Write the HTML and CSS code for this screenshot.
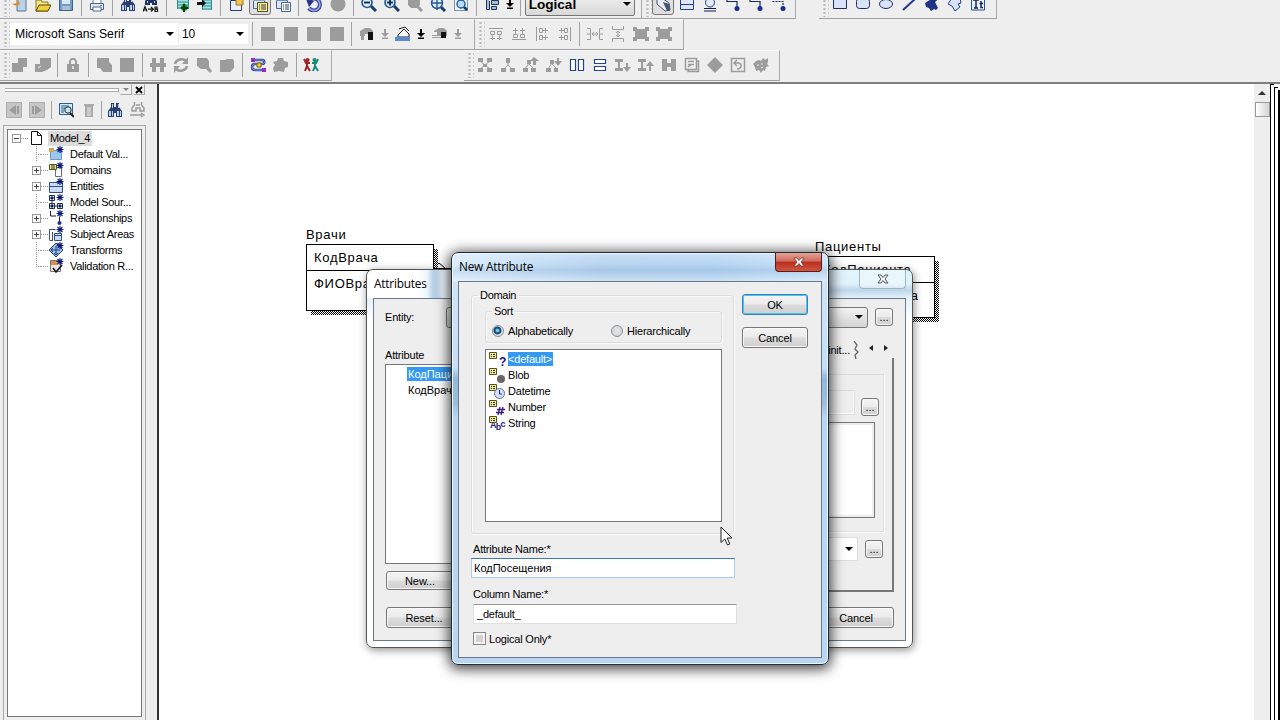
FILE: index.html
```html
<!DOCTYPE html>
<html lang="ru">
<head>
    <meta charset="UTF-8">
    <meta name="viewport" content="width=device-width, initial-scale=1.0">
    <title>Model_4</title>
    <link rel="stylesheet" href="styles.css">
</head>
<body>
    <!-- Icon set -->
    <svg class="sprite">
        <symbol id="new" viewBox="0 0 16 16"><path d="M5 3h9v12H5z" fill="#b9d2ea" stroke="#5a7894"/><path d="M0 8l5-1 1-4 2 5-3 2-3-1z" fill="#d98a32"/></symbol>
        <symbol id="open" viewBox="0 0 16 16"><path d="M1 4h5l1 2h6v9H1z" fill="#f5e58a" stroke="#8a7420"/><path d="M4 9h12l-3 6H1z" fill="#efd040" stroke="#574800"/></symbol>
        <symbol id="save" viewBox="0 0 16 16"><path d="M1.500 1.500h13v13h-13z" fill="#6f9cc9" stroke="#3f5f85"/><path d="M4 2h8v6H4z" fill="#d8e8f8"/><path d="M4 10h8v4H4z" fill="#a9bfd2"/></symbol>
        <symbol id="print" viewBox="0 0 16 16"><path d="M4 2h8v6H4z" fill="#fff" stroke="#6a7fa0"/><path d="M1.500 7.500h13v6h-13z" fill="#dfe6f2" stroke="#51658c"/><path d="M4 11h8v4H4z" fill="#fff" stroke="#51658c"/><path d="M11 9h2v1h-2z" fill="#39a05a"/></symbol>
        <symbol id="find" viewBox="0 0 16 16"><path d="M4 1h3v4h2V1h3v4l3 4v6H9v-4H7v4H1V9l3-4z" fill="#27406f"/><path d="M5 2h1v4H5zM11 2h1v4h-1zM2 9h2v5H2zM5 9h1v5H5zM10 9h2v5h-2zM13 9h1v5h-1z" fill="#bcd3ef"/></symbol>
        <symbol id="replace" viewBox="0 0 16 16"><path d="M4 0h3v3h2V0h3v3l2 2v4H9V7H7v2H2V5l2-2z" fill="#1c3560"/><path d="M4 5h1v2H4zM11 5h1v2h-1z" fill="#bcd3ef"/><path d="M0 15.500l2-5 2 5M.7 14h2.600M12 11v4.500h2.500v-2.300H12h2V11zM5 13.200h5M8 11l2.300 2.200L8 15.500" fill="none" stroke="#111" stroke-width="1.200"/></symbol>
        <symbol id="tabin" viewBox="0 0 16 16"><path d="M3 0h12v13H3z" fill="#a7e0e0"/><path d="M3 3h12M3 6h12M3 9h12M3 12h12M3.500 0v13M14.500 0v13" stroke="#2b8d93"/><path d="M10 7l5 5-5 4-4-4z" fill="#118a2c"/><path d="M9 8h2v8H9zM7 11h7v2H7z" fill="#043c10"/></symbol>
        <symbol id="tabout" viewBox="0 0 16 16"><path d="M5 1h10v13H5z" fill="#a7e0e0"/><path d="M5 4h10M5 7h10M5 10h10M5 13h10M5.500 1v13M14.500 1v13" stroke="#2b8d93"/><path d="M0 6h5V3l4 4-4 4V9H0z" fill="#0e1414"/></symbol>
        <symbol id="box" viewBox="0 0 16 16"><path d="M2.500 4.500h11v10h-11z" fill="#eaf0fb" stroke="#2c3a78"/><path d="M8 1h7v8H8z" fill="#f3c653" stroke="#a07318"/></symbol>
        <symbol id="sheets" viewBox="0 0 16 16"><path d="M1.500 2.500h11v10h-11z" fill="#dbe6f7" stroke="#52658f"/><path d="M1 2h12v3H1z" fill="#8aa4cc"/><path d="M5.500 6.500h10v9h-10z" fill="#fdf29d" stroke="#55531a"/><path d="M7 9h1m1 0h5M7 11h1m1 0h5M7 13h1m1 0h5" stroke="#333"/></symbol>
        <symbol id="sheetsb" viewBox="0 0 16 16"><path d="M1.500 2.500h11v10h-11z" fill="#dbe6f7" stroke="#52658f"/><path d="M1 2h12v3H1z" fill="#6f8fc6"/><path d="M6.500 6.500h9v9h-9z" fill="#fff" stroke="#45669d"/><path d="M8 9h1m1 0h4M8 11h1m1 0h4M8 13h1m1 0h4" stroke="#345"/></symbol>
        <symbol id="undo" viewBox="0 0 16 16"><path d="M4 4a6 6 0 1 1-1 8" fill="none" stroke="#3a459b" stroke-width="4"/><path d="M4 4a6 6 0 1 1-1 8" fill="none" stroke="#9aa6ea" stroke-width="1.500"/><path d="M0 3l8 2-5 6z" fill="#26358f"/></symbol>
        <symbol id="dot" viewBox="0 0 16 16"><circle cx="8" cy="8" r="7.500" fill="#9c9c9c"/></symbol>
        <symbol id="lens" viewBox="0 0 16 16"><path d="M10 10l5 5" stroke="#173d6d" stroke-width="3"/><circle cx="6" cy="6.500" r="5" fill="#d9efff" stroke="#2a5791" stroke-width="1.600"/><path d="M3 6.500h6" stroke="#16325e" stroke-width="2"/></symbol>
        <symbol id="lensplus" viewBox="0 0 16 16"><use href="#lens"/><path d="M6 3.500v6" stroke="#16325e" stroke-width="2"/></symbol>
        <symbol id="lensoff" viewBox="0 0 16 16"><path d="M10 10l5 5" stroke="#9c9c9c" stroke-width="3"/><path d="M1 0h12v9l-3 3H4l-3-3z" fill="#9c9c9c"/></symbol>
        <symbol id="lensfit" viewBox="0 0 16 16"><path d="M10 10l5 5" stroke="#173d6d" stroke-width="3"/><circle cx="7" cy="7" r="5.500" fill="#d9efff" stroke="#2a5791" stroke-width="1.500"/><path d="M1 7h12M7 1v13" stroke="#2a5791" stroke-width="1.400"/></symbol>
        <symbol id="lenssel" viewBox="0 0 16 16"><path d="M1.500 1.500h13v13h-13z" fill="#e7f2fc" stroke="#1c3560" stroke-dasharray="1 1"/><path d="M10 10l4 4" stroke="#173d6d" stroke-width="2.500"/><circle cx="8" cy="8" r="4" fill="#b6dcff" stroke="#2a5791" stroke-width="1.400"/></symbol>
        <symbol id="layout" viewBox="0 0 16 16"><path d="M2.500 0v13.500h3V5M7.500 4.500h7v4h-7zM7.500 10.500h5v3h-5z" fill="#a9bedc" stroke="#1c3560"/></symbol>
        <symbol id="down" viewBox="0 0 8 16"><path d="M3 3h2v4h3l-4 4-4-4h3zM1 11.500h6v1.500H1z"/></symbol>
        <symbol id="arrow" viewBox="0 0 16 16"><path d="M2 2l5 0 7 5 1 7-5 1-8-7z" fill="#e9edf5" stroke="#46546e"/><path d="M8 6l6 2 1 7h-3z" fill="#46546e"/></symbol>
        <symbol id="rowbox" viewBox="0 0 16 16"><path d="M1.500 1.500h13v12h-13zM1 8.500h14" fill="#dde5f7" stroke="#27408b"/></symbol>
        <symbol id="under" viewBox="0 0 16 16"><circle cx="8" cy="6.500" r="4.500" fill="#e1e9fa" stroke="#27408b"/><path d="M2 12.500h12M2 15h12" stroke="#111c48"/></symbol>
        <symbol id="link" viewBox="0 0 16 16"><path d="M2 2v3.500h10V12" fill="none" stroke="#1a2a60" stroke-width="1.200"/><circle cx="12" cy="12.500" r="2.500" fill="#1b2c8e"/></symbol>
        <symbol id="linkdash" viewBox="0 0 16 16"><path d="M2 2v3.500h10V12" fill="none" stroke="#1a2a60" stroke-width="1.200" stroke-dasharray="2 1"/><circle cx="12" cy="12.500" r="2.500" fill="#1b2c8e"/></symbol>
        <symbol id="rect" viewBox="0 0 16 16"><path d="M1.500 2.500h13v10h-13z" fill="#d8e2f8" stroke="#1d2d62"/></symbol>
        <symbol id="round" viewBox="0 0 16 16"><rect x="1.500" y="2.500" width="13" height="10" rx="3" fill="#d8e2f8" stroke="#1d2d62"/></symbol>
        <symbol id="oval" viewBox="0 0 16 16"><ellipse cx="8" cy="8" rx="6.500" ry="4.500" fill="#d8e2f8" stroke="#1d2d62"/></symbol>
        <symbol id="line" viewBox="0 0 16 16"><path d="M2 14L14 3" stroke="#24398a" stroke-width="2"/></symbol>
        <symbol id="pin" viewBox="0 0 16 16"><path d="M14 1L4 11" stroke="#1e3384" stroke-width="3"/><path d="M1 7l8-5 5 10-2 2-2-1-3 2-2-3-3-1z" fill="#1e3384"/></symbol>
        <symbol id="poly" viewBox="0 0 16 16"><path d="M1 8l4-6h8l1 5-3 1 2 3-5 4-3-5z" fill="#d8e2f8" stroke="#27408b"/></symbol>
        <symbol id="text" viewBox="0 0 16 16"><path d="M1.500 1.500h13v12.500h-13z" fill="#eaf2fb" stroke="#27518b"/><path d="M3 4h6M6 4v8M4 12h4M11 5v6.500h2M9.500 7.500H13" stroke="#162757" stroke-width="1.500" fill="none"/></symbol>

        <symbol id="sq" viewBox="0 0 16 16"><path d="M1 1h14v14H1z"/></symbol>
        <symbol id="steps" viewBox="0 0 16 16"><path d="M6 1h9v9h-4v5H0V6h6z"/></symbol>
        <symbol id="stepsr" viewBox="0 0 16 16"><path d="M5 1h11v9l-4 3-5 2H0V7h5z"/><path d="M3 11l3-2" stroke="#eee"/></symbol>
        <symbol id="lock" viewBox="0 0 16 16"><path d="M2 7h2V4l2-3h4l2 3v3h2v8H2zM6 7h4V4L9 3H7L6 4z" fill-rule="evenodd"/><path d="M8 9v3" stroke="#eee" stroke-width="1.500"/></symbol>
        <symbol id="bag" viewBox="0 0 16 16"><path d="M1 1h12v4l3 3v7H7l-3-4H1z"/></symbol>
        <symbol id="join" viewBox="0 0 16 16"><path d="M2 1h4v5h4V1h4v5h2v4h-2v5h-4v-5H6v5H2v-5H0V6h2z"/></symbol>
        <symbol id="sync" viewBox="0 0 16 16"><path d="M2 7c1-5 8-6 11-3M14 9c-1 5-8 6-11 3" fill="none" stroke="#9c9c9c" stroke-width="2.500"/><path d="M15 0v7H9zM1 16V9h6z"/></symbol>
        <symbol id="lenssq" viewBox="0 0 16 16"><path d="M1 1h10l2 3v6l3 4-2 2-4-4H5l-4-3z"/></symbol>
        <symbol id="tag" viewBox="0 0 16 16"><path d="M1 3h5l2-1h6l1 2v7l-4 4H1z"/></symbol>
        <symbol id="flow" viewBox="0 0 16 16"><path d="M3 3h9c3 0 3 4 0 4H5c-4 0-4 6 0 6h8" fill="none" stroke="#2c3e9e" stroke-width="2.500"/><path d="M3 3h9c3 0 3 4 0 4H5c-4 0-4 6 0 6h8" fill="none" stroke="#8fb4ea" stroke-width=".8"/><path d="M1 1h4v4H1zM12 11h4v4h-4z" fill="#8f2bc7"/><path d="M7 6h4v4H7z" fill="#f1d832" stroke="#776500"/></symbol>
        <symbol id="puzzle" viewBox="0 0 16 16"><path d="M5 1h5l1 3 4 1v5l-3 1-1 4-5-1-5 1-1-4 2-3-2-3 4-1z"/></symbol>
        <symbol id="people" viewBox="0 0 16 16"><path d="M1 2l2 4h4M4 2v7M4 9l-2 5M4 9l3 5" stroke="#a31f25" stroke-width="2" fill="none"/><circle cx="4.500" cy="3" r="2" fill="#a31f25"/><path d="M15 2l-2 4H9M12 2v7M12 9l-2 5M12 9l3 5" stroke="#148c78" stroke-width="2" fill="none"/><circle cx="11.500" cy="3" r="2" fill="#148c78"/></symbol>

        <symbol id="fill" viewBox="0 0 16 16"><path d="M1 5l5-3h5l3 3v3H6v2H1zM2 10h3v4H2z"/><path d="M9 6h5v8H9z" fill="#111"/></symbol>
        <symbol id="bucket" viewBox="0 0 16 16"><path d="M3 9l6-6 5 5v3H3z" fill="#f6f6f6" stroke="#222"/><path d="M4 3l6-2 4 4" stroke="#222" fill="none"/><path d="M0 11h15v4H0z" fill="#5c8bd0"/></symbol>
        <symbol id="pen" viewBox="0 0 16 16"><path d="M2 5l5-3h5l3 3v5H0V9h5V6H2zM0 11h13v1H0z"/><path d="M9 6h5v6H9z" fill="#111"/></symbol>
        <symbol id="altop" viewBox="0 0 16 16"><path d="M1 2.500h14M2.500 5.500h4v3h-4zM9.500 5.500h4v3h-4zM4.500 8v6M11.500 8v6M2 12.500h5M9 12.500h5" class="ln"/></symbol>
        <symbol id="albot" viewBox="0 0 16 16"><path d="M1 13.500h14M2.500 8.500h4v3h-4zM9.500 8.500h4v3h-4zM4.500 2v6M11.500 2v6M2 4.500h5M9 4.500h5" class="ln"/></symbol>
        <symbol id="alleft" viewBox="0 0 16 16"><path d="M2.500 1v14M5.500 2.500h3v4h-3zM5.500 9.500h3v4h-3zM9 4.500h5M9 11.500h5M11.500 2v5M11.500 9v5" class="ln"/></symbol>
        <symbol id="alright" viewBox="0 0 16 16"><path d="M13.500 1v14M7.500 2.500h3v4h-3zM7.500 9.500h3v4h-3zM2 4.500h5M2 11.500h5M4.500 2v5M4.500 9v5" class="ln"/></symbol>
        <symbol id="sph" viewBox="0 0 16 16"><path d="M0 2.500h3.500v11H0M0 8h3M16 2.500h-3.500v11H16M13 8h3M5 8h6M7 6L5 8l2 2M9 6l2 2-2 2" class="ln"/></symbol>
        <symbol id="spv" viewBox="0 0 16 16"><path d="M2.500 0v3.500h11V0M2.500 16v-3.500h11V16M8 5v6M6 7l2-2 2 2M6 9l2 2 2-2" class="ln"/></symbol>
        <symbol id="group" viewBox="0 0 16 16"><path d="M0 1h4v2h8V1h4v4h-2v6h2v4h-4v-2H4v2H0v-4h2V5H0z"/></symbol>
        <symbol id="tree4" viewBox="0 0 16 16"><path d="M1 1h5v4H1zM10 1h5v4h-5zM1 11h5v4H1zM10 11h5v4h-5zM6 7h4v3H6z"/><path d="M3 4l10 8M13 4L3 12" class="ln"/></symbol>
        <symbol id="tree3" viewBox="0 0 16 16"><path d="M6 1h4v5H6zM1 11h5v4H1zM10 11h5v4h-5z"/><path d="M8 5v3L4 12M8 8l4 4" class="ln"/></symbol>
        <symbol id="treeup" viewBox="0 0 16 16"><path d="M4 3h4v4H4zM0 11h5v4H0zM8 11h5v4H8zM11 0l5 4h-3v4h-3V4H7z"/><path d="M6 6l-4 6M6 7l5 5" class="ln"/></symbol>
        <symbol id="treedn" viewBox="0 0 16 16"><path d="M4 3h4v4H4zM0 11h5v4H0zM8 11h4v4H8zM11 1h2v3h3l-4 5-4-5h3z"/><path d="M6 6l-4 6M6 7l5 5" class="ln"/></symbol>
        <symbol id="cols" viewBox="0 0 16 16"><path d="M1.500 2.500h5v11h-5zM9.500 2.500h5v11h-5z" fill="#fff" stroke="#214488" stroke-width="1.200"/></symbol>
        <symbol id="rows" viewBox="0 0 16 16"><path d="M2.500 2.500h11v4h-11zM2.500 9.500h11v4h-11z" fill="#fff" stroke="#214488" stroke-width="1.200"/></symbol>
        <symbol id="idn" viewBox="0 0 16 16"><path d="M0 2h8v3H5v6h3v3H0v-3h3V5H0zM11 6h2v4h3l-4 5-4-5h3z"/></symbol>
        <symbol id="iup" viewBox="0 0 16 16"><path d="M0 2h8v3H5v6h3v3H0v-3h3V5H0zM12 4l4 5h-3v5h-2V9H8z"/></symbol>
        <symbol id="aitch" viewBox="0 0 16 16"><path d="M1 2h5v4h4V2h5v12h-5v-4H6v4H1z"/></symbol>
        <symbol id="notes" viewBox="0 0 16 16"><path d="M1.500 1.500h11v11h-11zM12 4h2.500v10.500H4V12M4 4.500h6M4 7.500h6M4 10l4-3" class="ln" stroke-width="1.500"/></symbol>
        <symbol id="diamond" viewBox="0 0 16 16"><path d="M8 0l8 8-8 8-8-8z"/></symbol>
        <symbol id="back" viewBox="0 0 16 16"><path d="M1.500 1.500h13v13h-13zM5 6h4c3 1 3 6-2 6M7 3L4 6l3 3" class="ln" stroke-width="1.500"/></symbol>
        <symbol id="splat" viewBox="0 0 16 16"><path d="M0 7l3-3 3-1 2 1 2-3 2 2 3-2v4l-1 2 2 2-3 1-1 4-2-1-2 3-2-3-3 1-1-4z"/><path d="M5 7v2M9 6v2M8 11l2-1" stroke="#eee"/></symbol>

        <symbol id="page" viewBox="0 0 16 16"><path d="M3.500 1.500h6l4 4v9h-10z" fill="#fff" stroke="#111"/><path d="M9.500 1.500v4h4" fill="none" stroke="#111"/></symbol>
        <symbol id="star" viewBox="0 0 16 16"><path d="M12 0v7M8.500 3.500h7M9.500 1l5 5M14.500 1l-5 5" stroke="#0d1a7c" stroke-width="1.100"/></symbol>
        <symbol id="tdefault" viewBox="0 0 16 16"><path d="M2.500 4.500h11v9h-11z" fill="#9fc6ee" stroke="#6d97c2"/><path d="M1 2h5v4H1z" fill="#d2a855"/><use href="#star"/></symbol>
        <symbol id="tdomain" viewBox="0 0 16 16"><path d="M7.500 5.500h6v9h-6z" fill="#fff" stroke="#5c7192"/><path d="M1.500 2.500h7v5h-7z" fill="#eee98b" stroke="#55531a"/><path d="M3 4h4M3 6h4" stroke="#333"/><use href="#star"/></symbol>
        <symbol id="tentity" viewBox="0 0 16 16"><path d="M1.500 4.500h13v10h-13z" fill="#c9dbf5" stroke="#344f87"/><path d="M2 8.500h12" stroke="#344f87"/><use href="#star"/></symbol>
        <symbol id="tsource" viewBox="0 0 16 16"><path d="M1.500 1.500h5v5h-5zM1.500 9.500h5v5h-5zM9.500 9.500h5v5h-5z" fill="#dbe6fb" stroke="#1c2b50"/><path d="M3 3h2v2H3zM3 11h2v2H3zM11 11h2v2h-2zM4 7v2M7 12h2" stroke="#1c2b50"/><use href="#star"/></symbol>
        <symbol id="trel" viewBox="0 0 16 16"><path d="M2.500 1v5H8M11.500 7v5" stroke="#111c48" fill="none"/><circle cx="11.500" cy="13" r="2" fill="#1b2c8e"/><use href="#star"/></symbol>
        <symbol id="tsubj" viewBox="0 0 16 16"><path d="M1.500 14V3.500h6M5 14.500H1.500M4.500 14V6" stroke="#344f87" fill="none"/><path d="M6.500 7.500h7v7h-7z" fill="#c9dbf5" stroke="#344f87"/><path d="M7 9.500h7" stroke="#344f87"/><use href="#star"/></symbol>
        <symbol id="ttrans" viewBox="0 0 16 16"><path d="M8 1l7 7-7 7-7-7z" fill="#9fc0e8" stroke="#1d3d75"/><path d="M3 8h9M8 4v9M5 6L3 8l2 2M6 11l2 2 2-2" fill="none" stroke="#1d3d75"/><use href="#star"/></symbol>
        <symbol id="tvalid" viewBox="0 0 16 16"><path d="M2.500 2.500h10v11h-10z" fill="#e8e8e8" stroke="#777"/><path d="M3 3h7v4H3z" fill="#d8934a"/><path d="M5 10l3 4 6-7" fill="none" stroke="#111" stroke-width="1.600"/><use href="#star"/></symbol>

        <symbol id="card" viewBox="0 0 16 16"><path d="M.5 1.500h7v6h-7z" fill="#eeea9d" stroke="#55531a"/><path d="M2 3.500h1m1 0h2M2 5.500h1m1 0h2" stroke="#333"/></symbol>
        <symbol id="navl" viewBox="0 0 16 16"><path d="M.5.5h15v15H.5z" fill="#c6c6c6" stroke="#adadad"/><path d="M10 3v10L3 8zM11 4h2v8h-2z"/></symbol>
        <symbol id="navr" viewBox="0 0 16 16"><path d="M.5.5h15v15H.5z" fill="#c6c6c6" stroke="#adadad"/><path d="M6 3v10l7-5zM3 4h2v8H3z"/></symbol>
        <symbol id="look" viewBox="0 0 16 16"><path d="M1.500 1.500h13v11h-13z" fill="#d6e9f8" stroke="#27618b"/><path d="M3 4h8M3 6h4M3 8h3M3 10h3" stroke="#27618b"/><circle cx="10" cy="8" r="3.200" fill="#c8eaf7" stroke="#222"/><path d="M12 11l4 4" stroke="#222" stroke-width="2"/></symbol>
        <symbol id="trash" viewBox="0 0 16 16"><path d="M3 2h10v2H3zM4 4h8v11H4z" fill="#aaa"/><path d="M6 5h4v9H6z" fill="#ccc"/></symbol>
        <symbol id="findoff" viewBox="0 0 16 16"><path d="M4.500 0v3L2 6v3h4V6h4v3h4V6l-2.500-3V0M6 3h4M0 13h12M11 11l3 2-3 2" class="ln" stroke-width="1.500"/></symbol>
    </svg>

    <div class="app">
        <!-- Toolbars -->
        <div class="bars">
            <div class="bar-row">
                <div class="bar main-bar">
                    <i class="grip"></i>
                    <svg class="ico"><use href="#new"/></svg><svg class="ico"><use href="#open"/></svg><svg class="ico"><use href="#save"/></svg>
                    <i class="sep"></i>
                    <svg class="ico"><use href="#print"/></svg>
                    <i class="sep"></i>
                    <svg class="ico"><use href="#find"/></svg><svg class="ico"><use href="#replace"/></svg>
                    <i class="sep"></i>
                    <svg class="ico"><use href="#tabin"/></svg><svg class="ico"><use href="#tabout"/></svg>
                    <i class="sep"></i>
                    <svg class="ico"><use href="#box"/></svg><svg class="ico pressed"><use href="#sheets"/></svg><svg class="ico"><use href="#sheetsb"/></svg>
                    <i class="sep"></i>
                    <svg class="ico"><use href="#undo"/></svg><svg class="ico"><use href="#dot"/></svg>
                    <i class="sep"></i>
                    <svg class="ico"><use href="#lens"/></svg><svg class="ico"><use href="#lensplus"/></svg><svg class="ico"><use href="#lensoff"/></svg><svg class="ico"><use href="#lensfit"/></svg><svg class="ico"><use href="#lenssel"/></svg>
                    <i class="sep"></i>
                    <svg class="ico"><use href="#layout"/></svg><svg class="ico drop black"><use href="#down"/></svg>
                    <i class="sep"></i>
                    <div class="combo view-combo">Logical<i class="tri"></i></div>
                </div>
                <div class="bar tool-bar">
                    <i class="grip"></i>
                    <svg class="ico pressed"><use href="#arrow"/></svg><svg class="ico"><use href="#rowbox"/></svg><svg class="ico"><use href="#under"/></svg><svg class="ico"><use href="#link"/></svg><svg class="ico"><use href="#link"/></svg><svg class="ico"><use href="#linkdash"/></svg>
                </div>
                <div class="bar draw-bar">
                    <i class="grip"></i>
                    <svg class="ico"><use href="#rect"/></svg><svg class="ico"><use href="#round"/></svg><svg class="ico"><use href="#oval"/></svg><svg class="ico"><use href="#line"/></svg><svg class="ico"><use href="#pin"/></svg><svg class="ico"><use href="#poly"/></svg><svg class="ico"><use href="#text"/></svg>
                </div>
            </div>
            <div class="bar-row">
                <div class="bar font-bar">
                    <i class="grip"></i>
                    <div class="combo font-combo">Microsoft Sans Serif<i class="tri"></i></div>
                    <div class="combo size-combo">10<i class="tri"></i></div>
                    <i class="sep"></i>
                    <svg class="ico"><use href="#sq"/></svg><svg class="ico"><use href="#sq"/></svg><svg class="ico"><use href="#sq"/></svg><svg class="ico"><use href="#sq"/></svg>
                    <i class="sep"></i>
                    <svg class="ico"><use href="#fill"/></svg><svg class="ico drop"><use href="#down"/></svg><svg class="ico"><use href="#bucket"/></svg><svg class="ico drop black"><use href="#down"/></svg><svg class="ico"><use href="#pen"/></svg><svg class="ico drop"><use href="#down"/></svg>
                </div>
                <div class="bar align-bar">
                    <i class="grip"></i>
                    <svg class="ico"><use href="#altop"/></svg><svg class="ico"><use href="#albot"/></svg><svg class="ico"><use href="#alleft"/></svg><svg class="ico"><use href="#alright"/></svg>
                    <i class="sep"></i>
                    <svg class="ico"><use href="#sph"/></svg><svg class="ico"><use href="#spv"/></svg><svg class="ico"><use href="#group"/></svg><svg class="ico"><use href="#group"/></svg>
                </div>
            </div>
            <div class="bar-row">
                <div class="bar model-bar">
                    <i class="grip"></i>
                    <svg class="ico"><use href="#steps"/></svg><svg class="ico"><use href="#stepsr"/></svg>
                    <i class="sep"></i>
                    <svg class="ico"><use href="#lock"/></svg>
                    <i class="sep"></i>
                    <svg class="ico"><use href="#bag"/></svg><svg class="ico"><use href="#sq"/></svg>
                    <i class="sep"></i>
                    <svg class="ico"><use href="#join"/></svg><svg class="ico"><use href="#sync"/></svg><svg class="ico"><use href="#lenssq"/></svg><svg class="ico"><use href="#tag"/></svg>
                    <i class="sep"></i>
                    <svg class="ico"><use href="#flow"/></svg><svg class="ico"><use href="#puzzle"/></svg>
                    <i class="sep"></i>
                    <svg class="ico"><use href="#people"/></svg>
                </div>
                <div class="bar trans-bar">
                    <i class="grip"></i>
                    <svg class="ico"><use href="#tree4"/></svg><svg class="ico"><use href="#tree3"/></svg><svg class="ico"><use href="#treeup"/></svg><svg class="ico"><use href="#treedn"/></svg><svg class="ico"><use href="#cols"/></svg><svg class="ico"><use href="#rows"/></svg><svg class="ico"><use href="#idn"/></svg><svg class="ico"><use href="#iup"/></svg><svg class="ico"><use href="#aitch"/></svg><svg class="ico"><use href="#notes"/></svg><svg class="ico"><use href="#diamond"/></svg><svg class="ico"><use href="#back"/></svg><svg class="ico"><use href="#splat"/></svg>
                </div>
            </div>
        </div>

        <div class="work">
            <!-- Model explorer -->
            <div class="side">
                <div class="side-head">
                    <i class="rails"></i>
                    <span class="mini"><i class="tri grey"></i></span>
                    <span class="mini"><svg viewBox="0 0 8 8"><path d="M1 1l6 6M7 1L1 7" stroke="#000" stroke-width="1.800"/></svg></span>
                </div>
                <div class="side-tools">
                    <svg class="ico"><use href="#navl"/></svg><svg class="ico"><use href="#navr"/></svg>
                    <i class="sep"></i>
                    <svg class="ico"><use href="#look"/></svg><svg class="ico"><use href="#trash"/></svg>
                    <i class="sep"></i>
                    <svg class="ico"><use href="#find"/></svg><svg class="ico"><use href="#findoff"/></svg>
                </div>
                <div class="tree-frame">
                    <ul class="tree">
                        <li class="root"><b class="exp minus"></b><i class="dots"></i><svg><use href="#page"/></svg><span class="picked">Model_4</span></li>
                        <li><b class="noexp"></b><i class="dots"></i><svg><use href="#tdefault"/></svg><span>Default Val...</span></li>
                        <li><b class="exp"></b><i class="dots"></i><svg><use href="#tdomain"/></svg><span>Domains</span></li>
                        <li><b class="exp"></b><i class="dots"></i><svg><use href="#tentity"/></svg><span>Entities</span></li>
                        <li><b class="noexp"></b><i class="dots"></i><svg><use href="#tsource"/></svg><span>Model Sour...</span></li>
                        <li><b class="exp"></b><i class="dots"></i><svg><use href="#trel"/></svg><span>Relationships</span></li>
                        <li><b class="exp"></b><i class="dots"></i><svg><use href="#tsubj"/></svg><span>Subject Areas</span></li>
                        <li><b class="noexp"></b><i class="dots"></i><svg><use href="#ttrans"/></svg><span>Transforms</span></li>
                        <li><b class="noexp last"></b><i class="dots"></i><svg><use href="#tvalid"/></svg><span>Validation R...</span></li>
                    </ul>
                </div>
            </div>

            <!-- Diagram -->
            <div class="canvas">
                <div class="entity doctors">
                    <div class="entity-name">Врачи</div>
                    <div class="entity-box">
                        <div class="key">КодВрача</div>
                        <div class="attr">ФИОВрача</div>
                    </div>
                </div>
                <svg class="relation" viewBox="0 0 30 14"><path d="M0 8l5-5 6 5M0 8.500h30" fill="none" stroke="#000"/></svg>
                <div class="entity patients">
                    <div class="entity-name">Пациенты</div>
                    <div class="entity-box">
                        <div class="key">КодПациента</div>
                        <div class="attr">ФИОПациента</div>
                    </div>
                </div>
            </div>
            <div class="scroll"><i class="up"></i><i class="thumb"></i></div>
            <div class="stack"><i></i><i></i><i></i></div>
        </div>

        <!-- Attributes window -->
        <div class="window attributes">
            <div class="title">Attributes<span class="close-off"><svg viewBox="0 0 12 10"><path d="M1 1h3l2 2.500L8 1h3L8 5l3 4H8L6 6.500 4 9H1l3-4z" fill="#fff" stroke="#4a5866"/></svg></span></div>
            <div class="client">
                <div class="entity-row">
                    <label>Entity:</label>
                    <div class="combo flat"><i class="tri"></i></div>
                    <button class="more">...</button>
                </div>
                <div class="split">
                    <div class="left">
                        <label>Attribute</label>
                        <ul class="attr-list">
                            <li><span class="on">КодПациента</span></li>
                            <li><span>КодВрача</span></li>
                        </ul>
                        <button class="new-btn">New...</button>
                    </div>
                    <div class="right">
                        <div class="tabs">
                            <span>init...</span>
                            <svg viewBox="0 0 6 18"><path d="M1 0l3 4-2 4 3 3-3 3 1 4" fill="none" stroke="#666" stroke-width="1.300"/></svg>
                            <div class="tab-nav"><i class="l"></i><i class="r"></i></div>
                        </div>
                        <div class="panel">
                            <div class="group">
                                <div class="field-row"><div class="readonly"></div><button class="more">...</button></div>
                                <div class="area"></div>
                            </div>
                            <div class="bottom-row"><div class="combo plain"><i class="tri"></i></div><button class="more">...</button></div>
                        </div>
                    </div>
                </div>
                <div class="foot"><button>Reset...</button><button>Cancel</button></div>
            </div>
        </div>

        <!-- New Attribute window -->
        <div class="window new-attribute">
            <div class="title">New Attribute<span class="close"><svg viewBox="0 0 12 10"><path d="M1 1h3l2 2.500L8 1h3L8 5l3 4H8L6 6.500 4 9H1l3-4z" fill="#fff" stroke="#6b3a3a" stroke-width=".8"/></svg></span></div>
            <div class="client">
                <div class="form">
                    <fieldset class="domain">
                        <legend>Domain</legend>
                        <fieldset class="sort">
                            <legend>Sort</legend>
                            <label><i class="radio checked"></i>Alphabetically</label>
                            <label><i class="radio"></i>Hierarchically</label>
                        </fieldset>
                        <ul class="types">
                            <li><svg viewBox="0 0 18 16"><use href="#card" width="16" height="16"/><text x="10" y="15" class="q">?</text></svg><span class="on">&lt;default&gt;</span></li>
                            <li><svg viewBox="0 0 18 16"><use href="#card" width="16" height="16"/><circle cx="12" cy="12" r="4" fill="#666"/></svg><span>Blob</span></li>
                            <li><svg viewBox="0 0 18 16"><use href="#card" width="16" height="16"/><circle cx="10.500" cy="10.500" r="5" fill="#d5e0fa" stroke="#6170a8"/><path d="M10.500 7v4H13" fill="none" stroke="#1c2f86"/></svg><span>Datetime</span></li>
                            <li><svg viewBox="0 0 18 16"><use href="#card" width="16" height="16"/><path d="M11 8l-2 8M14 8l-2 8M8 10.500h8M7 13.500h8" stroke="#3c1a78" stroke-width="1.300"/></svg><span>Number</span></li>
                            <li><svg viewBox="0 0 18 16"><text x="1" y="13" class="abc">A<tspan dy="2">b</tspan><tspan dy="-3">c</tspan></text><use href="#card" width="16" height="16"/></svg><span>String</span></li>
                        </ul>
                    </fieldset>
                    <label class="cap">Attribute Name:*</label>
                    <div class="input focus">КодПосещения</div>
                    <label class="cap col">Column Name:*</label>
                    <div class="input shifted">_default_</div>
                    <label class="check"><i></i>Logical Only*</label>
                </div>
                <div class="actions">
                    <button class="primary">OK</button>
                    <button>Cancel</button>
                </div>
            </div>
        </div>

        <svg class="cursor" viewBox="0 0 13 20"><path d="M1 1v15.500l3.700-3.500 2.800 6 2.300-1-2.600-6H12z" fill="#fff" stroke="#222"/></svg>
    </div>
</body>
</html>
```
FILE: styles.css
```css
* {
    box-sizing: border-box;
}

body {
    margin: 0;
    font-family: "Liberation Sans", Arial, sans-serif;
    font-size: 11px;
    letter-spacing: -0.2px;
    color: #000;
    overflow: hidden;
}

ul {
    list-style: none;
    margin: 0;
    padding: 0;
}

i {
    display: block;
    font-style: normal;
}

.sprite {
    position: absolute;
    width: 0;
    height: 0;
}

.ln {
    fill: none;
    stroke: #9c9c9c;
}

.app {
    position: relative;
    width: 1280px;
    height: 720px;
    display: flex;
    flex-direction: column;
    background: #eee;
    overflow: hidden;
}

/* Toolbars */
.bars {
    flex: none;
    height: 94px;
    margin-top: -12px;
}

.bar-row {
    display: flex;
    height: 31px;
}

.bar {
    display: flex;
    align-items: center;
    height: 31px;
    padding: 0 0 2px 3px;
    border-top: 1px solid #fafafa;
    border-right: 1px solid #a8a8a8;
    border-bottom: 1px solid #a0a0a0;
}

.main-bar { width: 642px; padding-bottom: 0; }
.tool-bar { width: 154px; padding-bottom: 0; }
.draw-bar { width: 178px; padding-bottom: 0; margin-left: 23px; }
.font-bar { width: 475px; }
.align-bar { width: 209px; }
.model-bar { width: 332px; }
.trans-bar { width: 316px; margin-left: 132px; }

.grip {
    width: 7px;
    height: 26px;
    margin-right: -2px;
    flex: none;
    background: radial-gradient(circle, #bbb 1px, transparent 1.3px) 0 0 / 5px 4px;
}

.tool-bar .grip, .draw-bar .grip, .align-bar .grip, .trans-bar .grip {
    margin-right: -1px;
}

.ico {
    flex: none;
    width: 16px;
    height: 16px;
    margin: 0 3.5px;
    fill: #9c9c9c;
}

.main-bar .ico {
    margin: 0 3.6px;
}

.ico.pressed, .main-bar .ico.pressed {
    width: 22px;
    height: 22px;
    margin: 0 1px;
    padding: 2px;
    border: 1px solid #777;
    border-radius: 3px;
    background: #dedede;
}

.ico.drop {
    width: 8px;
    margin: 0 3px;
}

.black {
    fill: #000;
}

.sep {
    flex: none;
    width: 1px;
    height: 24px;
    margin: 0 3px;
    background: #a2a2a2;
}

.main-bar .sep, .model-bar .sep {
    margin: 0 3.4px;
}

.tri {
    width: 0;
    height: 0;
    border: 4px solid transparent;
    border-top-color: #000;
    border-bottom: 0;
    margin-left: auto;
}

.tri.grey {
    border-width: 3px 3px 0;
    border-top-color: #888;
    margin: auto;
}

.combo {
    display: flex;
    align-items: center;
    padding: 0 4px 0 5px;
    background: #fff;
    font-size: 12px;
}

.view-combo {
    flex: none;
    width: 110px;
    height: 24px;
    padding: 1px 3px 0 3px;
    border: 1px solid #777;
    border-radius: 2px;
    background: linear-gradient(#f4f4f4, #d8d8d8);
    font-weight: bold;
    font-size: 13.6px;
    letter-spacing: 0;
    line-height: 13px;
}

.font-combo {
    width: 168px;
    height: 22px;
    margin-left: 2px;
    font-size: 12.2px;
    letter-spacing: 0;
}

.size-combo {
    width: 69px;
    height: 20px;
    margin: 0 1px;
    padding-left: 3px;
}

.font-bar .drop {
    margin: 0 2.8px;
}

.main-bar .drop {
    margin: 0 3px 0 2px;
}

/* Work area */
.work {
    flex: 1;
    display: flex;
    min-height: 0;
    border-top: 2px solid #7e7e7e;
}

.side {
    width: 157px;
    flex: none;
    display: flex;
    flex-direction: column;
}

.side-head {
    display: flex;
    align-items: center;
    height: 11px;
    padding-left: 5px;
    gap: 1px;
}

.rails {
    width: 114px;
    height: 4px;
    border: 1px solid #aaa;
    border-left: 0;
    background: #fff;
}

.mini {
    display: flex;
    align-items: center;
    width: 12px;
    height: 11px;
    border: 1px solid #aaa;
    border-left-color: #eee;
    border-top-color: #eee;
}

.mini svg {
    width: 8px;
    height: 8px;
    margin: auto;
}

.side-tools {
    display: flex;
    align-items: center;
    height: 30px;
    padding-left: 2px;
}

.side-tools .sep {
    height: 18px;
    margin: 0 2px 0 3px;
}

.side-tools .sep:nth-of-type(2) {
    margin: 0 1px;
}

.tree-frame {
    flex: 1;
    width: 143px;
    margin-left: 3px;
    padding: 3px;
    border: 1px solid #aaa;
    border-bottom: 0;
}

.tree {
    height: 100%;
    border: 1px solid #777;
    background: #fff;
    padding: 0 0 0 4px;
    letter-spacing: -0.3px;
}

.tree li {
    display: flex;
    align-items: center;
    height: 16px;
    padding-left: 20px;
    white-space: nowrap;
}

.tree .root {
    padding-left: 0;
}

.tree svg {
    width: 16px;
    height: 16px;
    margin-right: 5px;
}

.tree .root svg {
    margin-right: 4px;
}

.tree span {
    line-height: 15px;
    padding: 0 1px;
}

.tree .picked {
    padding: 0 2px;
    background: #dcdcdc;
}

.exp, .noexp {
    flex: none;
    width: 9px;
    height: 9px;
}

.exp {
    border: 1px solid #999;
    background: linear-gradient(#444, #444) center / 5px 1px no-repeat, linear-gradient(#444, #444) center / 1px 5px no-repeat;
}

.exp.minus {
    background: linear-gradient(#444, #444) center / 5px 1px no-repeat;
}

.noexp {
    height: 16px;
    background: repeating-linear-gradient(#999 0 1px, transparent 1px 2px) 4px 0 / 1px 100% no-repeat, repeating-linear-gradient(90deg, #999 0 1px, transparent 1px 2px) 4px 8px / 5px 1px no-repeat;
}

.noexp.last {
    background-size: 1px 8px, 5px 1px;
}

.dots {
    flex: none;
    width: 7px;
    height: 1px;
    background: repeating-linear-gradient(90deg, #999 0 1px, transparent 1px 2px);
}

/* Diagram */
.canvas {
    position: relative;
    flex: 1;
    border-left: 2px solid #333;
    background: #fff;
}

.entity {
    position: absolute;
    z-index: 0;
    font-size: 13px;
    letter-spacing: 0.7px;
}

.doctors {
    left: 147px;
    top: 142px;
}

.patients {
    left: 656px;
    top: 154px;
}

.entity-name {
    height: 18px;
    line-height: 18px;
}

.entity-box {
    position: relative;
    width: 128px;
    height: 67px;
    border: 1px solid #000;
    background: #fff;
}

.patients .entity-box {
    width: 120px;
    height: 62px;
}

.entity-box::after {
    content: "";
    position: absolute;
    left: 4px;
    top: 4px;
    width: calc(100% + 1px);
    height: calc(100% + 1px);
    z-index: -1;
    background: repeating-conic-gradient(#000 0 25%, #fff 0 50%) 0 0 / 2px 2px;
}

.key, .attr {
    height: 26px;
    padding-left: 7px;
    line-height: 25px;
    background: #fff;
}

.key {
    border-bottom: 1px solid #000;
}

.attr {
    height: 39px;
}

.patients .attr {
    height: 34px;
}

.relation {
    position: absolute;
    left: 275px;
    top: 176px;
    width: 30px;
    height: 14px;
}

.scroll {
    width: 16px;
    display: flex;
    flex-direction: column;
    align-items: center;
    background: #eee;
}

.up {
    border: 4px solid transparent;
    border-bottom-color: #333;
    border-top: 0;
    margin: 7px 0;
}

.thumb {
    width: 15px;
    height: 15px;
    border: 1px solid #999;
    background: linear-gradient(90deg, #fff, #d4d4d4);
}

.stack {
    display: flex;
    width: 10px;
    background: #fff;
}

.stack i {
    width: 4px;
    border-left: 1px solid #000;
    border-top: 1px solid #000;
}

.stack i + i { margin-top: 3px; }
.stack i + i + i { margin-top: 6px; width: 2px; border-left-width: 2px; }

/* Windows */
.window {
    position: absolute;
    padding: 0 6px 6px;
    display: flex;
    flex-direction: column;
    border: 1px solid #555;
    border-radius: 7px;
}

.attributes {
    left: 366px;
    top: 269px;
    width: 547px;
    height: 379px;
    background: linear-gradient(90deg, #fff 0 50px, #eef7fc 60px, #b9cfe6 66px 70px, #eef5fb 76px 100px, transparent 400px) 0 0 / 100% 28px no-repeat, linear-gradient(#e0f5fa 0, #e0f2fa 14px, #c0d6ea 20px, #e3f1fb 28px, #fff 50px);
    box-shadow: 1px 2px 8px rgba(0, 0, 0, 0.45);
}

.new-attribute {
    left: 451px;
    top: 252px;
    width: 378px;
    height: 413px;
    border-color: #222c38;
    background: linear-gradient(rgba(255, 255, 255, 0.3), transparent 12px, rgba(90, 130, 175, 0.15) 17px, rgba(255, 255, 255, 0.3) 28px) 0 0 / 100% 29px no-repeat, linear-gradient(90deg, #d8ebfc, #b5d3f0 40%, #b3d4f2 70%, #c9e2f9) 0 0 / 100% 29px no-repeat, linear-gradient(#d0e6fb 0, #c4dff7 115px, #93b8da 125px, #9dbddc 150px, #b9d7f3 165px, #b9d7f3);
    box-shadow: inset 0 0 0 1px #eaf6ff, 0 2px 13px 2px rgba(0, 0, 0, 0.75);
}

.title {
    display: flex;
    flex: none;
    height: 28px;
    padding: 1px 0 0 1px;
    line-height: 25px;
    font-family: "Open Sans", "Noto Sans", sans-serif;
    font-size: 11.8px;
    letter-spacing: -0.2px;
}

.close, .close-off {
    display: flex;
    align-items: center;
    justify-content: center;
    width: 47px;
    height: 19px;
    margin: -1px 0 0 auto;
    border: 1px solid #5a1a16;
    border-top: 0;
    border-radius: 0 0 4px 4px;
    background: linear-gradient(#e3a294, #cf6a5b 45%, #b92e1e 50%, #cf5540);
}

.close-off {
    border-color: #9fb4c6;
    background: rgba(255, 255, 255, 0.3);
}

.close svg, .close-off svg {
    width: 12px;
    height: 10px;
}

.client {
    flex: 1;
    border: 1px solid #69798a;
    background: #eee;
}

button {
    display: block;
    height: 21px;
    padding: 0;
    border: 1px solid #777;
    border-radius: 3px;
    background: linear-gradient(#f4f4f4, #ebebeb 48%, #dcdcdc 52%, #cfcfcf);
    box-shadow: inset 0 0 0 1px #f8f8f8;
    font: 11px "Liberation Sans", Arial, sans-serif;
    letter-spacing: -0.1px;
}

.more {
    width: 18px;
    height: 18px;
}

/* Attributes content */
.attributes .client {
    padding: 8px 11px 0;
}

.entity-row {
    display: flex;
    align-items: center;
    height: 20px;
}

.entity-row label {
    width: 61px;
}

.entity-row .combo {
    width: 422px;
    height: 21px;
    margin-right: 7px;
    border: 1px solid #777;
    border-radius: 3px;
    background: linear-gradient(#f2f2f2, #d5d5d5);
}

.split {
    display: flex;
    height: 265px;
    margin-top: 13px;
}

.left {
    width: 200px;
    padding-top: 8px;
}

.left label {
    display: block;
    height: 16px;
    line-height: 14px;
}

.attr-list {
    height: 200px;
    border: 1px solid #777;
    background: #fff;
    padding: 1px 0 0 21px;
}

.attr-list li {
    height: 16px;
    line-height: 16px;
}

.attr-list span {
    display: inline-block;
    height: 14px;
    padding: 0 1px;
    line-height: 15px;
    letter-spacing: 0;
}

.on {
    background: #3399f3;
    color: #fff;
}

.new-btn {
    width: 68px;
    height: 19px;
    margin: 7px 0 0 1px;
}

.right {
    flex: 1;
    padding-left: 100px;
}

.tabs {
    display: flex;
    align-items: center;
    justify-content: flex-end;
    height: 18px;
    padding-top: 1px;
}

.tabs svg {
    width: 6px;
    height: 18px;
    margin: 0 8px 0 3px;
}

.tab-nav {
    display: flex;
    align-items: center;
    gap: 11px;
    width: 27px;
    margin-bottom: 3px;
    padding-left: 2px;
}

.tab-nav .l, .tab-nav .r {
    border: 3px solid transparent;
    border-right: 4px solid #222;
    border-left: 0;
}

.tab-nav .r {
    border-right: 0;
    border-left: 4px solid #222;
}

.panel {
    height: 234px;
    border-right: 2px solid #777;
    border-bottom: 2px solid #777;
    padding: 16px 8px 0 0;
}

.group {
    height: 158px;
    padding: 15px 4px 0 0;
    border: 1px solid #ddd;
    box-shadow: 1px 1px #fff;
}

.field-row {
    display: flex;
    gap: 6px;
    height: 32px;
    padding-top: 1px;
    align-items: center;
}

.readonly {
    flex: 1;
    height: 25px;
    margin-bottom: 8px;
    border: 1px solid #ddd;
    box-shadow: inset -1px -1px #fff;
}

.area {
    height: 96px;
    margin: 0 4px 0 0;
    border: 1px solid #777;
    box-shadow: inset 0 0 0 2px #eee;
    background: #fff;
}

.bottom-row {
    display: flex;
    align-items: center;
    gap: 7px;
    margin: 5px 1px 0 0;
}

.plain {
    flex: 1;
    height: 24px;
    border: 1px solid #ddd;
}

.foot {
    display: flex;
    justify-content: space-between;
    margin-top: 2px;
    padding: 0 0 0 1px;
}

.foot button {
    width: 76px;
}

/* New Attribute content */
.new-attribute .client {
    display: flex;
    padding: 7px 13px 0 12px;
}

.form {
    width: 264px;
    flex: none;
    margin-right: 7px;
}

fieldset {
    min-width: 0;
    margin: 0;
    padding: 0;
    border: 1px solid #dcdcdc;
    border-radius: 3px;
    box-shadow: inset 1px 1px #fafafa, 1px 1px #fafafa;
}

legend {
    margin-left: 6px;
    padding: 0 2px;
    height: 13px;
    line-height: 13px;
    letter-spacing: -0.3px;
}

.domain {
    width: 263px;
    height: 245px;
    padding: 3px 12px 0 13px;
}

.domain > legend {
    margin-left: -7px;
}

.sort {
    display: flex;
    height: 38px;
    width: 237px;
    padding-left: 6px;
}

.sort > legend {
    margin-left: 0;
}

.sort label {
    display: inline-flex;
    align-items: center;
    height: 26px;
    width: 119px;
}

.sort label + label {
    width: 100px;
}

.radio {
    width: 12px;
    height: 12px;
    margin-right: 4px;
    border: 1px solid #8a8f94;
    border-radius: 50%;
    background: radial-gradient(#e6e6e6, #cfcfcf);
}

.radio.checked {
    background: radial-gradient(circle at 45% 45%, #7bd0ef 0 1px, #14507a 2.5px 3.5px, #e6e6e6 4.5px);
}

.types {
    width: 237px;
    height: 173px;
    margin-top: 6px;
    padding: 1px 0 0 3px;
    border: 1px solid #777;
    background: #fff;
}

.types li {
    display: flex;
    height: 16px;
    line-height: 15px;
}

.types svg {
    width: 18px;
    height: 16px;
    margin-right: 1px;
    overflow: visible;
}

.types span {
    height: 14px;
    margin-top: 1px;
    padding: 0 1px 0 0;
    line-height: 14px;
}

.q {
    font-size: 12px;
    font-weight: bold;
    fill: #120f8c;
}

.abc {
    font-size: 9px;
    font-weight: bold;
    fill: #25207f;
    letter-spacing: -0.8px;
}

.cap {
    display: block;
    height: 15px;
    margin: 9px 0 0 2px;
    line-height: 13px;
}

.cap.col {
    margin-top: 10px;
    height: 16px;
}

.input {
    width: 264px;
    height: 20px;
    padding-left: 2px;
    line-height: 18px;
    background: #fff;
    border: 1px solid #e0e0e0;
    border-top-color: #999;
}

.input.focus {
    border-color: #a9cde6;
    border-top-color: #3d7bad;
    letter-spacing: 0;
}

.input.shifted {
    margin-left: 2px;
    padding-left: 3px;
}

.check {
    display: flex;
    align-items: center;
    gap: 3px;
    margin: 8px 0 0 2px;
}

.check i {
    width: 13px;
    height: 13px;
    border: 1px solid #888;
    box-shadow: inset 0 0 0 2px #f4f4f4;
    background: #d3d3d3;
}

.actions {
    width: 66px;
    padding-top: 5px;
}

.actions button {
    width: 66px;
    height: 21px;
    margin-bottom: 12px;
}

.actions .primary {
    border-color: #3c7fb1;
    box-shadow: inset 0 0 0 1px #48c8f0;
}

.cursor {
    position: absolute;
    left: 720px;
    top: 526px;
    width: 13px;
    height: 20px;
}
```
